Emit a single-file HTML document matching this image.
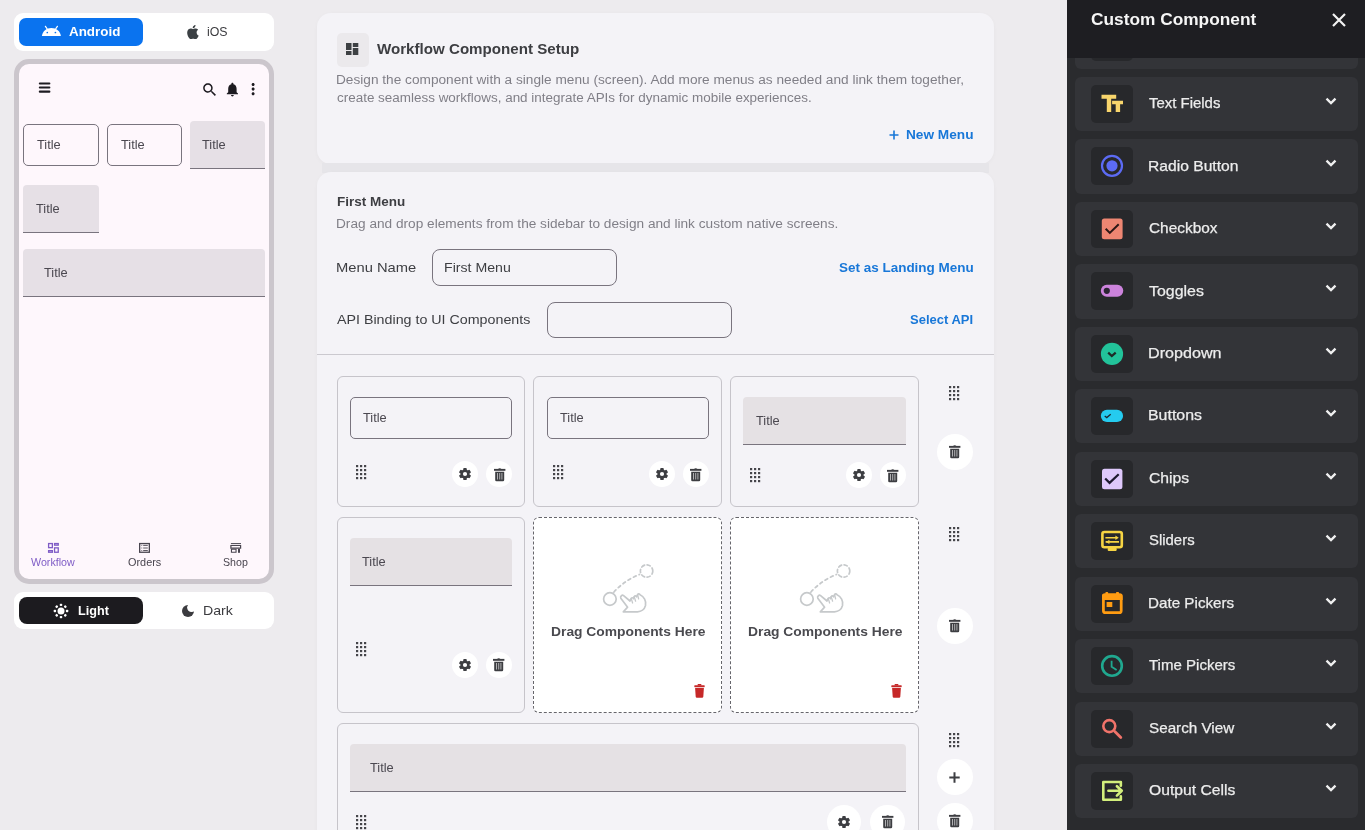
<!DOCTYPE html>
<html><head><meta charset="utf-8"><style>
html,body{margin:0;padding:0;}
body{width:1365px;height:830px;overflow:hidden;position:relative;background:#edebee;font-family:"Liberation Sans",sans-serif;}
body>div,body>svg{position:absolute;}
.t{white-space:nowrap;}
</style></head><body>
<div style="left:14px;top:13px;width:260px;height:38px;background:#fff;border-radius:9px"></div>
<div style="left:19px;top:18px;width:124px;height:28px;background:#0a73ef;border-radius:7px"></div>
<svg style="left:41px;top:25px;" width="21" height="12" viewBox="0 0 21 12"><path d="M0.9 11.1C1.6 5.9 5.3 2.9 10.4 2.9S19.2 5.9 19.9 11.1Z" fill="#fff"/><path d="M4.4 1.3L6 3.6M16.4 1.3L14.8 3.6" stroke="#fff" stroke-width="1.2" stroke-linecap="round"/><circle cx="6.3" cy="7.5" r="0.85" fill="#0a73ef"/><circle cx="14.4" cy="7.5" r="0.85" fill="#0a73ef"/></svg>
<div class="t" style="left:68.70px;top:25.00px;font-size:13.5px;line-height:13.5px;letter-spacing:0.000px;transform:scaleX(0.9924);transform-origin:0 0;color:#fff;font-weight:bold">Android</div>
<svg style="left:186px;top:25px;" width="13" height="14" viewBox="0 0 13 14"><path d="M10.6 7.4c0-1.7 1.4-2.5 1.5-2.6-.8-1.2-2.1-1.3-2.5-1.3-1.1-.1-2.1.6-2.6.6-.6 0-1.4-.6-2.3-.6C3.5 3.5 2.4 4.2 1.8 5.3.5 7.5 1.5 10.8 2.7 12.5c.6.9 1.3 1.8 2.2 1.8.9 0 1.2-.6 2.3-.6s1.4.6 2.3.6c1 0 1.6-.9 2.2-1.8.7-1 1-2 1-2-.1 0-2.1-.8-2.1-3.1zM8.8 2.2c.5-.6.8-1.4.7-2.2-.7 0-1.5.5-2 1.1-.5.5-.9 1.3-.8 2.1.8.1 1.6-.4 2.1-1z" fill="#3b4044"/></svg>
<div class="t" style="left:206.70px;top:25.00px;font-size:13.5px;line-height:13.5px;letter-spacing:0.000px;transform:scaleX(0.9156);transform-origin:0 0;color:#3b3b3f">iOS</div>
<div style="left:14px;top:59px;width:260px;height:525px;box-sizing:border-box;border:5px solid #cbc6cc;border-radius:15px;background:#fef7fc"></div>
<svg style="left:38px;top:82px;" width="13" height="11" viewBox="0 0 13 11"><rect x="0.8" y="0.4" width="11.6" height="2.1" rx="1" fill="#1d1b20"/><rect x="0.8" y="4.5" width="11.6" height="2.1" rx="1" fill="#1d1b20"/><rect x="0.8" y="8.6" width="11.6" height="2.1" rx="1" fill="#1d1b20"/></svg>
<svg style="left:200.7px;top:80.7px;" width="18" height="18" viewBox="0 0 18 18"><path transform="scale(0.73)" d="M15.5 14h-.79l-.28-.27C15.41 12.59 16 11.11 16 9.5 16 5.91 13.09 3 9.5 3S3 5.91 3 9.5 5.91 16 9.5 16c1.61 0 3.09-.59 4.23-1.57l.27.28v.79l5 4.99L20.49 19l-4.99-5zm-6 0C7.01 14 5 11.99 5 9.5S7.01 5 9.5 5 14 7.01 14 9.5 11.99 14 9.5 14z" fill="#1d1b20"/></svg>
<svg style="left:224px;top:81px;" width="17" height="17" viewBox="0 0 17 17"><path transform="scale(0.7)" d="M12 22c1.1 0 2-.9 2-2h-4c0 1.1.89 2 2 2zm6-6v-5c0-3.07-1.64-5.64-4.5-6.32V4c0-.83-.67-1.5-1.5-1.5s-1.5.67-1.5 1.5v.68C7.63 5.36 6 7.92 6 11v5l-2 2v1h16v-1l-2-2z" fill="#1d1b20"/></svg>
<svg style="left:244.1px;top:80px;" width="18" height="18" viewBox="0 0 18 18"><path transform="scale(0.76)" d="M12 8c1.1 0 2-.9 2-2s-.9-2-2-2-2 .9-2 2 .9 2 2 2zm0 2c-1.1 0-2 .9-2 2s.9 2 2 2 2-.9 2-2-.9-2-2-2zm0 6c-1.1 0-2 .9-2 2s.9 2 2 2 2-.9 2-2-.9-2-2-2z" fill="#1d1b20"/></svg>
<div style="left:23px;top:124px;width:76px;height:42px;box-sizing:border-box;border:1px solid #79747e;border-radius:5px"></div>
<div class="t" style="left:36.70px;top:138.00px;font-size:13px;line-height:13px;letter-spacing:0.000px;transform:scaleX(0.9855);transform-origin:0 0;color:#4b4850">Title</div>
<div style="left:107px;top:124px;width:75px;height:42px;box-sizing:border-box;border:1px solid #79747e;border-radius:5px"></div>
<div class="t" style="left:120.50px;top:138.00px;font-size:13px;line-height:13px;letter-spacing:0.000px;transform:scaleX(0.9855);transform-origin:0 0;color:#4b4850">Title</div>
<div style="left:190px;top:121px;width:75px;height:48px;box-sizing:border-box;background:#e6e0e6;border-bottom:1px solid #79747e;border-radius:4px 4px 0 0"></div>
<div class="t" style="left:202.30px;top:138.00px;font-size:13px;line-height:13px;letter-spacing:0.000px;transform:scaleX(0.9855);transform-origin:0 0;color:#4b4850">Title</div>
<div style="left:23px;top:185px;width:76px;height:48px;box-sizing:border-box;background:#e6e0e6;border-bottom:1px solid #79747e;border-radius:4px 4px 0 0"></div>
<div class="t" style="left:35.50px;top:202.00px;font-size:13px;line-height:13px;letter-spacing:0.000px;transform:scaleX(0.9855);transform-origin:0 0;color:#4b4850">Title</div>
<div style="left:23px;top:249px;width:242px;height:48px;box-sizing:border-box;background:#e6e0e6;border-bottom:1px solid #79747e;border-radius:4px 4px 0 0"></div>
<div class="t" style="left:43.50px;top:266.00px;font-size:13px;line-height:13px;letter-spacing:0.000px;transform:scaleX(0.9855);transform-origin:0 0;color:#4b4850">Title</div>
<svg style="left:47px;top:542px;" width="13" height="12" viewBox="0 0 13 12"><g fill="none" stroke="#7f5cc6" stroke-width="1.3"><rect x="1.6" y="1.55" width="3.75" height="4.1"/><rect x="7.55" y="1.55" width="3.7" height="1.6"/><rect x="1.6" y="8.65" width="3.75" height="1.6"/><rect x="7.55" y="5.85" width="3.7" height="4.4"/></g></svg>
<div class="t" style="left:30.80px;top:557.00px;font-size:10.5px;line-height:10.5px;letter-spacing:0.000px;transform:scaleX(1.0185);transform-origin:0 0;color:#7f5cc6">Workflow</div>
<svg style="left:138px;top:542px;" width="13" height="12" viewBox="0 0 13 12"><rect x="1.65" y="1.55" width="9.7" height="8.7" fill="none" stroke="#49454f" stroke-width="1.3"/><path d="M3.4 3.4h0.8M5.2 3.4h4.6M3.4 6h0.8M5.2 6h4.6M3.4 8.5h0.8M5.2 8.5h4.6" stroke="#49454f" stroke-width="0.9"/></svg>
<div class="t" style="left:127.70px;top:557.00px;font-size:10.5px;line-height:10.5px;letter-spacing:0.000px;transform:scaleX(1.0364);transform-origin:0 0;color:#49454f">Orders</div>
<svg style="left:230px;top:542px;" width="12" height="12" viewBox="0 0 12 12"><rect x="0.9" y="1.1" width="10.1" height="1" fill="#49454f"/><path d="M0.3 3h10.9v3.8H0.3z M1.5 4v1.6h8.5V4z" fill="#49454f" fill-rule="evenodd"/><path d="M0.9 6.8h5.7v4H0.9z M2 7.8v2h3.5v-2z" fill="#49454f" fill-rule="evenodd"/><rect x="8" y="6.8" width="2" height="4" fill="#49454f"/></svg>
<div class="t" style="left:223.00px;top:557.00px;font-size:10.5px;line-height:10.5px;letter-spacing:0.000px;transform:scaleX(1.0129);transform-origin:0 0;color:#49454f">Shop</div>
<div style="left:14px;top:592px;width:260px;height:37px;background:#fff;border-radius:9px"></div>
<div style="left:19px;top:597px;width:124px;height:27px;background:#1c1b1f;border-radius:8px"></div>
<svg style="left:50.4px;top:600px;" width="22" height="22" viewBox="0 0 22 22"><circle cx="11" cy="11" r="3.5" fill="#fff"/><rect x="-1.25" y="-7.3" width="2.5" height="2.4" rx="0.8" fill="#fff" transform="translate(11 11) rotate(0)"/><rect x="-1.25" y="-7.3" width="2.5" height="2.4" rx="0.8" fill="#fff" transform="translate(11 11) rotate(45)"/><rect x="-1.25" y="-7.3" width="2.5" height="2.4" rx="0.8" fill="#fff" transform="translate(11 11) rotate(90)"/><rect x="-1.25" y="-7.3" width="2.5" height="2.4" rx="0.8" fill="#fff" transform="translate(11 11) rotate(135)"/><rect x="-1.25" y="-7.3" width="2.5" height="2.4" rx="0.8" fill="#fff" transform="translate(11 11) rotate(180)"/><rect x="-1.25" y="-7.3" width="2.5" height="2.4" rx="0.8" fill="#fff" transform="translate(11 11) rotate(225)"/><rect x="-1.25" y="-7.3" width="2.5" height="2.4" rx="0.8" fill="#fff" transform="translate(11 11) rotate(270)"/><rect x="-1.25" y="-7.3" width="2.5" height="2.4" rx="0.8" fill="#fff" transform="translate(11 11) rotate(315)"/></svg>
<div class="t" style="left:77.60px;top:604.00px;font-size:13.5px;line-height:13.5px;letter-spacing:0.000px;transform:scaleX(0.9346);transform-origin:0 0;color:#fff;font-weight:bold">Light</div>
<svg style="left:177px;top:600px;" width="22" height="22" viewBox="0 0 22 22"><defs><mask id="mm"><rect width="22" height="22" fill="#fff"/><circle cx="14.6" cy="7.6" r="4.5" fill="#000"/></mask></defs><circle cx="11" cy="10.9" r="6" fill="#3b3b3f" mask="url(#mm)"/></svg>
<div class="t" style="left:203.35px;top:604.00px;font-size:13.5px;line-height:13.5px;letter-spacing:0.000px;transform:scaleX(1.0485);transform-origin:0 0;color:#3b3b3f">Dark</div>
<div style="left:317px;top:13px;width:677px;height:151px;background:#f4f3f7;border-radius:14px;box-shadow:0 1px 4px rgba(0,0,0,0.03)"></div>
<div style="left:337px;top:33px;width:32px;height:34px;background:#ebe9ec;border-radius:5px"></div>
<svg style="left:346px;top:43px;" width="13" height="12" viewBox="0 0 13 12"><rect x="0" y="0" width="5.5" height="7" fill="#3d4043"/><rect x="0" y="8" width="5.5" height="4" fill="#3d4043"/><rect x="6.8" y="0" width="5.5" height="4" fill="#3d4043"/><rect x="6.8" y="5" width="5.5" height="7" fill="#3d4043"/></svg>
<div class="t" style="left:376.80px;top:41.00px;font-size:15px;line-height:15px;letter-spacing:0.000px;transform:scaleX(1.0081);transform-origin:0 0;color:#3d3e42;font-weight:bold">Workflow Component Setup</div>
<div class="t" style="left:336.01px;top:74.00px;font-size:12.5px;line-height:12.5px;letter-spacing:0.000px;transform:scaleX(1.0930);transform-origin:0 0;color:#807f87">Design the component with a single menu (screen). Add more menus as needed and link them together,</div>
<div class="t" style="left:337.10px;top:92.00px;font-size:12.5px;line-height:12.5px;letter-spacing:0.000px;transform:scaleX(1.0759);transform-origin:0 0;color:#807f87">create seamless workflows, and integrate APIs for dynamic mobile experiences.</div>
<svg style="left:888.9px;top:129.8px;" width="10" height="10" viewBox="0 0 10 10"><path d="M5 0.5v9M0.5 5h9" stroke="#1877d8" stroke-width="1.6"/></svg>
<div class="t" style="left:906.30px;top:129.00px;font-size:12.5px;line-height:12.5px;letter-spacing:0.000px;transform:scaleX(1.0920);transform-origin:0 0;color:#1877d8;font-weight:bold">New Menu</div>
<div style="left:322px;top:163px;width:667px;height:10px;background:#e6e5e9"></div>
<div style="left:317px;top:172px;width:677px;height:700px;background:#f4f3f7;border-radius:14px;box-shadow:0 1px 4px rgba(0,0,0,0.03)"></div>
<div class="t" style="left:336.90px;top:195.00px;font-size:13px;line-height:13px;letter-spacing:0.000px;transform:scaleX(1.0367);transform-origin:0 0;color:#3d3e42;font-weight:bold">First Menu</div>
<div class="t" style="left:335.91px;top:218.00px;font-size:12.5px;line-height:12.5px;letter-spacing:0.000px;transform:scaleX(1.0921);transform-origin:0 0;color:#807f87">Drag and drop elements from the sidebar to design and link custom native screens.</div>
<div class="t" style="left:335.87px;top:261.00px;font-size:13px;line-height:13px;letter-spacing:0.000px;transform:scaleX(1.1325);transform-origin:0 0;color:#3d3e42">Menu Name</div>
<div style="left:432px;top:249px;width:185px;height:37px;box-sizing:border-box;border:1px solid #79747e;border-radius:8px"></div>
<div class="t" style="left:443.91px;top:261.00px;font-size:13px;line-height:13px;letter-spacing:0.000px;transform:scaleX(1.0869);transform-origin:0 0;color:#3d3e42">First Menu</div>
<div class="t" style="left:838.60px;top:261.00px;font-size:13px;line-height:13px;letter-spacing:0.000px;transform:scaleX(1.0364);transform-origin:0 0;color:#1877d8;font-weight:bold">Set as Landing Menu</div>
<div class="t" style="left:337.00px;top:313.00px;font-size:13px;line-height:13px;letter-spacing:0.000px;transform:scaleX(1.0966);transform-origin:0 0;color:#3d3e42">API Binding to UI Components</div>
<div style="left:547px;top:302px;width:185px;height:36px;box-sizing:border-box;border:1px solid #79747e;border-radius:8px"></div>
<div class="t" style="left:910.20px;top:313.00px;font-size:13px;line-height:13px;letter-spacing:0.000px;transform:scaleX(0.9988);transform-origin:0 0;color:#1877d8;font-weight:bold">Select API</div>
<div style="left:317px;top:354px;width:677px;height:1px;background:#cbc9cf"></div>
<div style="left:337px;top:376px;width:188px;height:131px;box-sizing:border-box;border:1px solid #c6c4ca;border-radius:6px"></div>
<div style="left:350px;top:397px;width:162px;height:41.5px;box-sizing:border-box;border:1px solid #79747e;border-radius:5px"></div>
<div class="t" style="left:362.80px;top:411.00px;font-size:13px;line-height:13px;letter-spacing:0.000px;transform:scaleX(0.9855);transform-origin:0 0;color:#4b4850">Title</div>
<svg style="left:356.30px;top:464.90px;" width="11" height="15" viewBox="0 0 11 15"><rect x="0.00" y="0.00" width="2.2" height="2.2" fill="#45454a"/><rect x="4.00" y="0.00" width="2.2" height="2.2" fill="#45454a"/><rect x="8.00" y="0.00" width="2.2" height="2.2" fill="#45454a"/><rect x="0.00" y="4.00" width="2.2" height="2.2" fill="#45454a"/><rect x="4.00" y="4.00" width="2.2" height="2.2" fill="#45454a"/><rect x="8.00" y="4.00" width="2.2" height="2.2" fill="#45454a"/><rect x="0.00" y="8.00" width="2.2" height="2.2" fill="#45454a"/><rect x="4.00" y="8.00" width="2.2" height="2.2" fill="#45454a"/><rect x="8.00" y="8.00" width="2.2" height="2.2" fill="#45454a"/><rect x="0.00" y="12.00" width="2.2" height="2.2" fill="#45454a"/><rect x="4.00" y="12.00" width="2.2" height="2.2" fill="#45454a"/><rect x="8.00" y="12.00" width="2.2" height="2.2" fill="#45454a"/></svg>
<div style="left:452.30px;top:461.20px;width:26px;height:26px;background:#fff;border-radius:50%"></div>
<svg style="left:457.30px;top:466.20px;" width="16" height="16" viewBox="0 0 16 16"><g transform="translate(8,8)"><rect x="-1.75" y="-6.1" width="3.5" height="3.4" rx="0.9" transform="rotate(0)" fill="#3d3e42"/><rect x="-1.75" y="-6.1" width="3.5" height="3.4" rx="0.9" transform="rotate(60)" fill="#3d3e42"/><rect x="-1.75" y="-6.1" width="3.5" height="3.4" rx="0.9" transform="rotate(120)" fill="#3d3e42"/><rect x="-1.75" y="-6.1" width="3.5" height="3.4" rx="0.9" transform="rotate(180)" fill="#3d3e42"/><rect x="-1.75" y="-6.1" width="3.5" height="3.4" rx="0.9" transform="rotate(240)" fill="#3d3e42"/><rect x="-1.75" y="-6.1" width="3.5" height="3.4" rx="0.9" transform="rotate(300)" fill="#3d3e42"/><circle r="4.5" fill="#3d3e42"/><circle r="2.1" fill="#fff"/></g></svg>
<div style="left:486.30px;top:461.20px;width:26px;height:26px;background:#fff;border-radius:50%"></div>
<svg style="left:493.60px;top:467.60px;" width="12" height="14" viewBox="0 0 12 14"><rect x="0" y="0.9" width="11.4" height="1.9" fill="#3d3e42"/><path d="M4 0.9Q5.7-0.2 7.4 0.9z" fill="#3d3e42"/><path d="M1.2 3.7h9v8.2a1.3 1.3 0 0 1-1.3 1.3H2.5a1.3 1.3 0 0 1-1.3-1.3z" fill="#3d3e42"/><path d="M3.5 5v6.5M5.7 5v6.5M7.9 5v6.5" stroke="#bdbdc0" stroke-width="0.9"/></svg>
<div style="left:533px;top:376px;width:189px;height:131px;box-sizing:border-box;border:1px solid #c6c4ca;border-radius:6px"></div>
<div style="left:546.67px;top:397px;width:162px;height:41.5px;box-sizing:border-box;border:1px solid #79747e;border-radius:5px"></div>
<div class="t" style="left:559.50px;top:411.00px;font-size:13px;line-height:13px;letter-spacing:0.000px;transform:scaleX(0.9855);transform-origin:0 0;color:#4b4850">Title</div>
<svg style="left:553.00px;top:464.90px;" width="11" height="15" viewBox="0 0 11 15"><rect x="0.00" y="0.00" width="2.2" height="2.2" fill="#45454a"/><rect x="4.00" y="0.00" width="2.2" height="2.2" fill="#45454a"/><rect x="8.00" y="0.00" width="2.2" height="2.2" fill="#45454a"/><rect x="0.00" y="4.00" width="2.2" height="2.2" fill="#45454a"/><rect x="4.00" y="4.00" width="2.2" height="2.2" fill="#45454a"/><rect x="8.00" y="4.00" width="2.2" height="2.2" fill="#45454a"/><rect x="0.00" y="8.00" width="2.2" height="2.2" fill="#45454a"/><rect x="4.00" y="8.00" width="2.2" height="2.2" fill="#45454a"/><rect x="8.00" y="8.00" width="2.2" height="2.2" fill="#45454a"/><rect x="0.00" y="12.00" width="2.2" height="2.2" fill="#45454a"/><rect x="4.00" y="12.00" width="2.2" height="2.2" fill="#45454a"/><rect x="8.00" y="12.00" width="2.2" height="2.2" fill="#45454a"/></svg>
<div style="left:649.00px;top:461.20px;width:26px;height:26px;background:#fff;border-radius:50%"></div>
<svg style="left:654.00px;top:466.20px;" width="16" height="16" viewBox="0 0 16 16"><g transform="translate(8,8)"><rect x="-1.75" y="-6.1" width="3.5" height="3.4" rx="0.9" transform="rotate(0)" fill="#3d3e42"/><rect x="-1.75" y="-6.1" width="3.5" height="3.4" rx="0.9" transform="rotate(60)" fill="#3d3e42"/><rect x="-1.75" y="-6.1" width="3.5" height="3.4" rx="0.9" transform="rotate(120)" fill="#3d3e42"/><rect x="-1.75" y="-6.1" width="3.5" height="3.4" rx="0.9" transform="rotate(180)" fill="#3d3e42"/><rect x="-1.75" y="-6.1" width="3.5" height="3.4" rx="0.9" transform="rotate(240)" fill="#3d3e42"/><rect x="-1.75" y="-6.1" width="3.5" height="3.4" rx="0.9" transform="rotate(300)" fill="#3d3e42"/><circle r="4.5" fill="#3d3e42"/><circle r="2.1" fill="#fff"/></g></svg>
<div style="left:683.00px;top:461.20px;width:26px;height:26px;background:#fff;border-radius:50%"></div>
<svg style="left:690.30px;top:467.60px;" width="12" height="14" viewBox="0 0 12 14"><rect x="0" y="0.9" width="11.4" height="1.9" fill="#3d3e42"/><path d="M4 0.9Q5.7-0.2 7.4 0.9z" fill="#3d3e42"/><path d="M1.2 3.7h9v8.2a1.3 1.3 0 0 1-1.3 1.3H2.5a1.3 1.3 0 0 1-1.3-1.3z" fill="#3d3e42"/><path d="M3.5 5v6.5M5.7 5v6.5M7.9 5v6.5" stroke="#bdbdc0" stroke-width="0.9"/></svg>
<div style="left:730px;top:376px;width:189px;height:131px;box-sizing:border-box;border:1px solid #c6c4ca;border-radius:6px"></div>
<div style="left:743px;top:397px;width:163px;height:48px;box-sizing:border-box;background:#e5e1e4;border-bottom:1px solid #79747e;border-radius:4px 4px 0 0"></div>
<div class="t" style="left:755.50px;top:414.00px;font-size:13px;line-height:13px;letter-spacing:0.000px;transform:scaleX(0.9855);transform-origin:0 0;color:#4b4850">Title</div>
<svg style="left:750.00px;top:467.70px;" width="11" height="15" viewBox="0 0 11 15"><rect x="0.00" y="0.00" width="2.2" height="2.2" fill="#45454a"/><rect x="4.00" y="0.00" width="2.2" height="2.2" fill="#45454a"/><rect x="8.00" y="0.00" width="2.2" height="2.2" fill="#45454a"/><rect x="0.00" y="4.00" width="2.2" height="2.2" fill="#45454a"/><rect x="4.00" y="4.00" width="2.2" height="2.2" fill="#45454a"/><rect x="8.00" y="4.00" width="2.2" height="2.2" fill="#45454a"/><rect x="0.00" y="8.00" width="2.2" height="2.2" fill="#45454a"/><rect x="4.00" y="8.00" width="2.2" height="2.2" fill="#45454a"/><rect x="8.00" y="8.00" width="2.2" height="2.2" fill="#45454a"/><rect x="0.00" y="12.00" width="2.2" height="2.2" fill="#45454a"/><rect x="4.00" y="12.00" width="2.2" height="2.2" fill="#45454a"/><rect x="8.00" y="12.00" width="2.2" height="2.2" fill="#45454a"/></svg>
<div style="left:845.70px;top:462.40px;width:26px;height:26px;background:#fff;border-radius:50%"></div>
<svg style="left:850.70px;top:467.40px;" width="16" height="16" viewBox="0 0 16 16"><g transform="translate(8,8)"><rect x="-1.75" y="-6.1" width="3.5" height="3.4" rx="0.9" transform="rotate(0)" fill="#3d3e42"/><rect x="-1.75" y="-6.1" width="3.5" height="3.4" rx="0.9" transform="rotate(60)" fill="#3d3e42"/><rect x="-1.75" y="-6.1" width="3.5" height="3.4" rx="0.9" transform="rotate(120)" fill="#3d3e42"/><rect x="-1.75" y="-6.1" width="3.5" height="3.4" rx="0.9" transform="rotate(180)" fill="#3d3e42"/><rect x="-1.75" y="-6.1" width="3.5" height="3.4" rx="0.9" transform="rotate(240)" fill="#3d3e42"/><rect x="-1.75" y="-6.1" width="3.5" height="3.4" rx="0.9" transform="rotate(300)" fill="#3d3e42"/><circle r="4.5" fill="#3d3e42"/><circle r="2.1" fill="#fff"/></g></svg>
<div style="left:879.70px;top:462.40px;width:26px;height:26px;background:#fff;border-radius:50%"></div>
<svg style="left:887.00px;top:468.80px;" width="12" height="14" viewBox="0 0 12 14"><rect x="0" y="0.9" width="11.4" height="1.9" fill="#3d3e42"/><path d="M4 0.9Q5.7-0.2 7.4 0.9z" fill="#3d3e42"/><path d="M1.2 3.7h9v8.2a1.3 1.3 0 0 1-1.3 1.3H2.5a1.3 1.3 0 0 1-1.3-1.3z" fill="#3d3e42"/><path d="M3.5 5v6.5M5.7 5v6.5M7.9 5v6.5" stroke="#bdbdc0" stroke-width="0.9"/></svg>
<svg style="left:949.10px;top:386.00px;" width="11" height="15" viewBox="0 0 11 15"><rect x="0.00" y="0.00" width="2.2" height="2.2" fill="#45454a"/><rect x="4.00" y="0.00" width="2.2" height="2.2" fill="#45454a"/><rect x="8.00" y="0.00" width="2.2" height="2.2" fill="#45454a"/><rect x="0.00" y="4.00" width="2.2" height="2.2" fill="#45454a"/><rect x="4.00" y="4.00" width="2.2" height="2.2" fill="#45454a"/><rect x="8.00" y="4.00" width="2.2" height="2.2" fill="#45454a"/><rect x="0.00" y="8.00" width="2.2" height="2.2" fill="#45454a"/><rect x="4.00" y="8.00" width="2.2" height="2.2" fill="#45454a"/><rect x="8.00" y="8.00" width="2.2" height="2.2" fill="#45454a"/><rect x="0.00" y="12.00" width="2.2" height="2.2" fill="#45454a"/><rect x="4.00" y="12.00" width="2.2" height="2.2" fill="#45454a"/><rect x="8.00" y="12.00" width="2.2" height="2.2" fill="#45454a"/></svg>
<div style="left:936.70px;top:433.50px;width:36px;height:36px;background:#fff;border-radius:50%"></div>
<svg style="left:949.00px;top:444.90px;" width="12" height="14" viewBox="0 0 12 14"><rect x="0" y="0.9" width="11.4" height="1.9" fill="#3d3e42"/><path d="M4 0.9Q5.7-0.2 7.4 0.9z" fill="#3d3e42"/><path d="M1.2 3.7h9v8.2a1.3 1.3 0 0 1-1.3 1.3H2.5a1.3 1.3 0 0 1-1.3-1.3z" fill="#3d3e42"/><path d="M3.5 5v6.5M5.7 5v6.5M7.9 5v6.5" stroke="#bdbdc0" stroke-width="0.9"/></svg>
<div style="left:337px;top:517px;width:188px;height:196px;box-sizing:border-box;border:1px solid #c6c4ca;border-radius:6px"></div>
<div style="left:350px;top:538px;width:162px;height:48px;box-sizing:border-box;background:#e5e1e4;border-bottom:1px solid #79747e;border-radius:4px 4px 0 0"></div>
<div class="t" style="left:362.00px;top:555.00px;font-size:13px;line-height:13px;letter-spacing:0.000px;transform:scaleX(0.9855);transform-origin:0 0;color:#4b4850">Title</div>
<svg style="left:356.10px;top:641.80px;" width="11" height="15" viewBox="0 0 11 15"><rect x="0.00" y="0.00" width="2.2" height="2.2" fill="#45454a"/><rect x="4.00" y="0.00" width="2.2" height="2.2" fill="#45454a"/><rect x="8.00" y="0.00" width="2.2" height="2.2" fill="#45454a"/><rect x="0.00" y="4.00" width="2.2" height="2.2" fill="#45454a"/><rect x="4.00" y="4.00" width="2.2" height="2.2" fill="#45454a"/><rect x="8.00" y="4.00" width="2.2" height="2.2" fill="#45454a"/><rect x="0.00" y="8.00" width="2.2" height="2.2" fill="#45454a"/><rect x="4.00" y="8.00" width="2.2" height="2.2" fill="#45454a"/><rect x="8.00" y="8.00" width="2.2" height="2.2" fill="#45454a"/><rect x="0.00" y="12.00" width="2.2" height="2.2" fill="#45454a"/><rect x="4.00" y="12.00" width="2.2" height="2.2" fill="#45454a"/><rect x="8.00" y="12.00" width="2.2" height="2.2" fill="#45454a"/></svg>
<div style="left:452.20px;top:651.80px;width:26px;height:26px;background:#fff;border-radius:50%"></div>
<svg style="left:457.20px;top:656.80px;" width="16" height="16" viewBox="0 0 16 16"><g transform="translate(8,8)"><rect x="-1.75" y="-6.1" width="3.5" height="3.4" rx="0.9" transform="rotate(0)" fill="#3d3e42"/><rect x="-1.75" y="-6.1" width="3.5" height="3.4" rx="0.9" transform="rotate(60)" fill="#3d3e42"/><rect x="-1.75" y="-6.1" width="3.5" height="3.4" rx="0.9" transform="rotate(120)" fill="#3d3e42"/><rect x="-1.75" y="-6.1" width="3.5" height="3.4" rx="0.9" transform="rotate(180)" fill="#3d3e42"/><rect x="-1.75" y="-6.1" width="3.5" height="3.4" rx="0.9" transform="rotate(240)" fill="#3d3e42"/><rect x="-1.75" y="-6.1" width="3.5" height="3.4" rx="0.9" transform="rotate(300)" fill="#3d3e42"/><circle r="4.5" fill="#3d3e42"/><circle r="2.1" fill="#fff"/></g></svg>
<div style="left:486.10px;top:651.80px;width:26px;height:26px;background:#fff;border-radius:50%"></div>
<svg style="left:493.40px;top:658.20px;" width="12" height="14" viewBox="0 0 12 14"><rect x="0" y="0.9" width="11.4" height="1.9" fill="#3d3e42"/><path d="M4 0.9Q5.7-0.2 7.4 0.9z" fill="#3d3e42"/><path d="M1.2 3.7h9v8.2a1.3 1.3 0 0 1-1.3 1.3H2.5a1.3 1.3 0 0 1-1.3-1.3z" fill="#3d3e42"/><path d="M3.5 5v6.5M5.7 5v6.5M7.9 5v6.5" stroke="#bdbdc0" stroke-width="0.9"/></svg>
<div style="left:533px;top:517px;width:189px;height:196px;box-sizing:border-box;border:1px dashed #66656b;border-radius:6px;background:#fff"></div>
<div class="t" style="left:550.90px;top:625.00px;font-size:13px;line-height:13px;letter-spacing:0.000px;transform:scaleX(1.0644);transform-origin:0 0;color:#4a4a4f;font-weight:bold">Drag Components Here</div>
<svg style="left:693.50px;top:683.50px;" width="11" height="14" viewBox="0 0 11 14"><rect x="0.3" y="1.2" width="10.4" height="2" rx="0.6" fill="#c62828"/><rect x="3.6" y="0" width="3.8" height="1.6" rx="0.6" fill="#c62828"/><path d="M1.1 4h8.8l-0.6 8.7a1.2 1.2 0 0 1-1.2 1.1H2.9a1.2 1.2 0 0 1-1.2-1.1z" fill="#c62828"/></svg>
<svg style="left:598px;top:558px;" width="60" height="60" viewBox="0 0 60 60"><g fill="none" stroke="#c6c9cb" stroke-width="1.7" stroke-linecap="round" stroke-linejoin="round"><circle cx="11.9" cy="41" r="6.3"/><circle cx="48.6" cy="13" r="6.2" stroke-dasharray="3.2 2.6"/><path d="M15.8 34.2Q27 22 41.5 16.5" stroke-dasharray="3 3.2"/><path d="M29.6 49.2L22.8 40.2C22 38.5 24 36.5 25.6 37.6L32 43L33.2 40.4C33.8 39.5 35.2 39.5 35.6 40.6L36.2 38.6C36.8 37.7 38.2 37.7 38.6 38.8L39.6 36.6C40.3 35.6 41.6 35.8 42 36.8C46 38.5 48.5 43 47.5 47.5C46.5 51.5 43 53.8 39.5 53.8L25.3 53.8Z"/><path d="M33.2 40.4L34.6 45M36.2 38.6L37.6 43.2M39.6 36.6L40.6 40.8" stroke-width="1.3"/></g></svg>
<div style="left:730px;top:517px;width:189px;height:196px;box-sizing:border-box;border:1px dashed #66656b;border-radius:6px;background:#fff"></div>
<div class="t" style="left:747.90px;top:625.00px;font-size:13px;line-height:13px;letter-spacing:0.000px;transform:scaleX(1.0644);transform-origin:0 0;color:#4a4a4f;font-weight:bold">Drag Components Here</div>
<svg style="left:890.50px;top:683.50px;" width="11" height="14" viewBox="0 0 11 14"><rect x="0.3" y="1.2" width="10.4" height="2" rx="0.6" fill="#c62828"/><rect x="3.6" y="0" width="3.8" height="1.6" rx="0.6" fill="#c62828"/><path d="M1.1 4h8.8l-0.6 8.7a1.2 1.2 0 0 1-1.2 1.1H2.9a1.2 1.2 0 0 1-1.2-1.1z" fill="#c62828"/></svg>
<svg style="left:795px;top:558px;" width="60" height="60" viewBox="0 0 60 60"><g fill="none" stroke="#c6c9cb" stroke-width="1.7" stroke-linecap="round" stroke-linejoin="round"><circle cx="11.9" cy="41" r="6.3"/><circle cx="48.6" cy="13" r="6.2" stroke-dasharray="3.2 2.6"/><path d="M15.8 34.2Q27 22 41.5 16.5" stroke-dasharray="3 3.2"/><path d="M29.6 49.2L22.8 40.2C22 38.5 24 36.5 25.6 37.6L32 43L33.2 40.4C33.8 39.5 35.2 39.5 35.6 40.6L36.2 38.6C36.8 37.7 38.2 37.7 38.6 38.8L39.6 36.6C40.3 35.6 41.6 35.8 42 36.8C46 38.5 48.5 43 47.5 47.5C46.5 51.5 43 53.8 39.5 53.8L25.3 53.8Z"/><path d="M33.2 40.4L34.6 45M36.2 38.6L37.6 43.2M39.6 36.6L40.6 40.8" stroke-width="1.3"/></g></svg>
<svg style="left:949.10px;top:526.70px;" width="11" height="15" viewBox="0 0 11 15"><rect x="0.00" y="0.00" width="2.2" height="2.2" fill="#45454a"/><rect x="4.00" y="0.00" width="2.2" height="2.2" fill="#45454a"/><rect x="8.00" y="0.00" width="2.2" height="2.2" fill="#45454a"/><rect x="0.00" y="4.00" width="2.2" height="2.2" fill="#45454a"/><rect x="4.00" y="4.00" width="2.2" height="2.2" fill="#45454a"/><rect x="8.00" y="4.00" width="2.2" height="2.2" fill="#45454a"/><rect x="0.00" y="8.00" width="2.2" height="2.2" fill="#45454a"/><rect x="4.00" y="8.00" width="2.2" height="2.2" fill="#45454a"/><rect x="8.00" y="8.00" width="2.2" height="2.2" fill="#45454a"/><rect x="0.00" y="12.00" width="2.2" height="2.2" fill="#45454a"/><rect x="4.00" y="12.00" width="2.2" height="2.2" fill="#45454a"/><rect x="8.00" y="12.00" width="2.2" height="2.2" fill="#45454a"/></svg>
<div style="left:936.80px;top:608.00px;width:36px;height:36px;background:#fff;border-radius:50%"></div>
<svg style="left:949.10px;top:619.40px;" width="12" height="14" viewBox="0 0 12 14"><rect x="0" y="0.9" width="11.4" height="1.9" fill="#3d3e42"/><path d="M4 0.9Q5.7-0.2 7.4 0.9z" fill="#3d3e42"/><path d="M1.2 3.7h9v8.2a1.3 1.3 0 0 1-1.3 1.3H2.5a1.3 1.3 0 0 1-1.3-1.3z" fill="#3d3e42"/><path d="M3.5 5v6.5M5.7 5v6.5M7.9 5v6.5" stroke="#bdbdc0" stroke-width="0.9"/></svg>
<div style="left:337px;top:723px;width:582px;height:200px;box-sizing:border-box;border:1px solid #c6c4ca;border-radius:6px"></div>
<div style="left:350px;top:744px;width:556px;height:48px;box-sizing:border-box;background:#e5e1e4;border-bottom:1px solid #79747e;border-radius:4px 4px 0 0"></div>
<div class="t" style="left:370.00px;top:761.00px;font-size:13px;line-height:13px;letter-spacing:0.000px;transform:scaleX(0.9855);transform-origin:0 0;color:#4b4850">Title</div>
<svg style="left:355.90px;top:814.50px;" width="11" height="15" viewBox="0 0 11 15"><rect x="0.00" y="0.00" width="2.2" height="2.2" fill="#45454a"/><rect x="4.00" y="0.00" width="2.2" height="2.2" fill="#45454a"/><rect x="8.00" y="0.00" width="2.2" height="2.2" fill="#45454a"/><rect x="0.00" y="4.00" width="2.2" height="2.2" fill="#45454a"/><rect x="4.00" y="4.00" width="2.2" height="2.2" fill="#45454a"/><rect x="8.00" y="4.00" width="2.2" height="2.2" fill="#45454a"/><rect x="0.00" y="8.00" width="2.2" height="2.2" fill="#45454a"/><rect x="4.00" y="8.00" width="2.2" height="2.2" fill="#45454a"/><rect x="8.00" y="8.00" width="2.2" height="2.2" fill="#45454a"/><rect x="0.00" y="12.00" width="2.2" height="2.2" fill="#45454a"/><rect x="4.00" y="12.00" width="2.2" height="2.2" fill="#45454a"/><rect x="8.00" y="12.00" width="2.2" height="2.2" fill="#45454a"/></svg>
<div style="left:826.50px;top:804.70px;width:34.6px;height:34.6px;background:#fff;border-radius:50%"></div>
<svg style="left:835.80px;top:814.00px;" width="16" height="16" viewBox="0 0 16 16"><g transform="translate(8,8)"><rect x="-1.75" y="-6.1" width="3.5" height="3.4" rx="0.9" transform="rotate(0)" fill="#3d3e42"/><rect x="-1.75" y="-6.1" width="3.5" height="3.4" rx="0.9" transform="rotate(60)" fill="#3d3e42"/><rect x="-1.75" y="-6.1" width="3.5" height="3.4" rx="0.9" transform="rotate(120)" fill="#3d3e42"/><rect x="-1.75" y="-6.1" width="3.5" height="3.4" rx="0.9" transform="rotate(180)" fill="#3d3e42"/><rect x="-1.75" y="-6.1" width="3.5" height="3.4" rx="0.9" transform="rotate(240)" fill="#3d3e42"/><rect x="-1.75" y="-6.1" width="3.5" height="3.4" rx="0.9" transform="rotate(300)" fill="#3d3e42"/><circle r="4.5" fill="#3d3e42"/><circle r="2.1" fill="#fff"/></g></svg>
<div style="left:870.30px;top:804.70px;width:34.6px;height:34.6px;background:#fff;border-radius:50%"></div>
<svg style="left:881.90px;top:815.40px;" width="12" height="14" viewBox="0 0 12 14"><rect x="0" y="0.9" width="11.4" height="1.9" fill="#3d3e42"/><path d="M4 0.9Q5.7-0.2 7.4 0.9z" fill="#3d3e42"/><path d="M1.2 3.7h9v8.2a1.3 1.3 0 0 1-1.3 1.3H2.5a1.3 1.3 0 0 1-1.3-1.3z" fill="#3d3e42"/><path d="M3.5 5v6.5M5.7 5v6.5M7.9 5v6.5" stroke="#bdbdc0" stroke-width="0.9"/></svg>
<svg style="left:949.20px;top:732.90px;" width="11" height="15" viewBox="0 0 11 15"><rect x="0.00" y="0.00" width="2.2" height="2.2" fill="#45454a"/><rect x="4.00" y="0.00" width="2.2" height="2.2" fill="#45454a"/><rect x="8.00" y="0.00" width="2.2" height="2.2" fill="#45454a"/><rect x="0.00" y="4.00" width="2.2" height="2.2" fill="#45454a"/><rect x="4.00" y="4.00" width="2.2" height="2.2" fill="#45454a"/><rect x="8.00" y="4.00" width="2.2" height="2.2" fill="#45454a"/><rect x="0.00" y="8.00" width="2.2" height="2.2" fill="#45454a"/><rect x="4.00" y="8.00" width="2.2" height="2.2" fill="#45454a"/><rect x="8.00" y="8.00" width="2.2" height="2.2" fill="#45454a"/><rect x="0.00" y="12.00" width="2.2" height="2.2" fill="#45454a"/><rect x="4.00" y="12.00" width="2.2" height="2.2" fill="#45454a"/><rect x="8.00" y="12.00" width="2.2" height="2.2" fill="#45454a"/></svg>
<div style="left:937.2px;top:759px;width:36px;height:36px;background:#fff;border-radius:50%"></div>
<svg style="left:949.2px;top:771.5px;" width="11" height="11" viewBox="0 0 11 11"><path d="M5.5 0.3v10.4M0.3 5.5h10.4" stroke="#3d3e42" stroke-width="2"/></svg>
<div style="left:937.00px;top:803.00px;width:36px;height:36px;background:#fff;border-radius:50%"></div>
<svg style="left:949.30px;top:814.40px;" width="12" height="14" viewBox="0 0 12 14"><rect x="0" y="0.9" width="11.4" height="1.9" fill="#3d3e42"/><path d="M4 0.9Q5.7-0.2 7.4 0.9z" fill="#3d3e42"/><path d="M1.2 3.7h9v8.2a1.3 1.3 0 0 1-1.3 1.3H2.5a1.3 1.3 0 0 1-1.3-1.3z" fill="#3d3e42"/><path d="M3.5 5v6.5M5.7 5v6.5M7.9 5v6.5" stroke="#bdbdc0" stroke-width="0.9"/></svg>
<div style="left:1067px;top:0px;width:298px;height:830px;background:#2a2b2e"></div>
<div style="left:1075px;top:14px;width:283px;height:55px;background:#333438;border-radius:6px"></div>
<div style="left:1091px;top:23px;width:42px;height:38px;background:#27282b;border-radius:5px"></div>
<div style="left:1067px;top:0px;width:298px;height:58px;background:#1e1e22"></div>
<div class="t" style="left:1091.20px;top:11.00px;font-size:16.5px;line-height:16.5px;letter-spacing:0.000px;transform:scaleX(1.0483);transform-origin:0 0;color:#f6f6f6;font-weight:bold">Custom Component</div>
<svg style="left:1332px;top:13px;" width="14" height="14" viewBox="0 0 14 14"><path d="M1 1L13 13M13 1L1 13" stroke="#f2f2f2" stroke-width="2.2"/></svg>
<div style="left:1075px;top:77.00px;width:283px;height:54.2px;background:#333438;border-radius:6px"></div>
<div style="left:1091px;top:85.00px;width:42px;height:38px;background:#27282b;border-radius:5px"></div>
<svg style="left:1099px;top:91.00px;" width="26" height="26" viewBox="0 0 26 26"><path d="M2.5 3.85h14.7v3.85h-5v13.3H7.8V7.7H2.5z" fill="#f8d56c"/><path d="M13.1 9.8h10.9v3.4h-2.9V21h-4.4v-7.8h-3.6z" fill="#f8d56c"/></svg>
<div class="t" style="left:1149.30px;top:95.00px;font-size:15px;line-height:15px;letter-spacing:0.000px;transform:scaleX(0.9959);transform-origin:0 0;color:#ededed;-webkit-text-stroke:0.25px #ededed">Text Fields</div>
<svg style="left:1325px;top:97.0px;" width="12" height="9" viewBox="0 0 12 9"><path d="M1.5 1.6L6 6.1 10.5 1.6" fill="none" stroke="#f0f0f0" stroke-width="2.3"/></svg>
<div style="left:1075px;top:139.45px;width:283px;height:54.2px;background:#333438;border-radius:6px"></div>
<div style="left:1091px;top:147.45px;width:42px;height:38px;background:#27282b;border-radius:5px"></div>
<svg style="left:1099px;top:153.45px;" width="26" height="26" viewBox="0 0 26 26"><circle cx="13" cy="12.8" r="10" fill="none" stroke="#5c6bf4" stroke-width="2.2"/><circle cx="13" cy="12.8" r="5.6" fill="#5c6bf4"/></svg>
<div class="t" style="left:1148.26px;top:158.00px;font-size:15px;line-height:15px;letter-spacing:0.000px;transform:scaleX(1.0424);transform-origin:0 0;color:#ededed;-webkit-text-stroke:0.25px #ededed">Radio Button</div>
<svg style="left:1325px;top:159.45px;" width="12" height="9" viewBox="0 0 12 9"><path d="M1.5 1.6L6 6.1 10.5 1.6" fill="none" stroke="#f0f0f0" stroke-width="2.3"/></svg>
<div style="left:1075px;top:201.90px;width:283px;height:54.2px;background:#333438;border-radius:6px"></div>
<div style="left:1091px;top:209.90px;width:42px;height:38px;background:#27282b;border-radius:5px"></div>
<svg style="left:1099px;top:215.90px;" width="26" height="26" viewBox="0 0 26 26"><rect x="2.8" y="2.5" width="20.8" height="20.8" rx="2.5" fill="#ee8672"/><path d="M6.7 12.8l4.1 4.1 8.9-8.7" fill="none" stroke="#2d1816" stroke-width="2"/></svg>
<div class="t" style="left:1149.30px;top:220.00px;font-size:15px;line-height:15px;letter-spacing:0.000px;transform:scaleX(1.0268);transform-origin:0 0;color:#ededed;-webkit-text-stroke:0.25px #ededed">Checkbox</div>
<svg style="left:1325px;top:221.9px;" width="12" height="9" viewBox="0 0 12 9"><path d="M1.5 1.6L6 6.1 10.5 1.6" fill="none" stroke="#f0f0f0" stroke-width="2.3"/></svg>
<div style="left:1075px;top:264.35px;width:283px;height:54.2px;background:#333438;border-radius:6px"></div>
<div style="left:1091px;top:272.35px;width:42px;height:38px;background:#27282b;border-radius:5px"></div>
<svg style="left:1099px;top:278.35px;" width="26" height="26" viewBox="0 0 26 26"><rect x="1.85" y="6.8" width="22.4" height="11.9" rx="5.95" fill="#cc83dc"/><circle cx="7.8" cy="12.8" r="3.1" fill="#2a2432"/></svg>
<div class="t" style="left:1149.30px;top:283.00px;font-size:15px;line-height:15px;letter-spacing:0.000px;transform:scaleX(1.0625);transform-origin:0 0;color:#ededed;-webkit-text-stroke:0.25px #ededed">Toggles</div>
<svg style="left:1325px;top:284.35px;" width="12" height="9" viewBox="0 0 12 9"><path d="M1.5 1.6L6 6.1 10.5 1.6" fill="none" stroke="#f0f0f0" stroke-width="2.3"/></svg>
<div style="left:1075px;top:326.80px;width:283px;height:54.2px;background:#333438;border-radius:6px"></div>
<div style="left:1091px;top:334.80px;width:42px;height:38px;background:#27282b;border-radius:5px"></div>
<svg style="left:1099px;top:340.80px;" width="26" height="26" viewBox="0 0 26 26"><circle cx="13" cy="12.9" r="11.1" fill="#22c39a"/><path d="M9.2 11.6l3.6 3.5 3.9-3.5" fill="none" stroke="#1e2a26" stroke-width="2.2"/></svg>
<div class="t" style="left:1148.22px;top:345.00px;font-size:15px;line-height:15px;letter-spacing:0.000px;transform:scaleX(1.0756);transform-origin:0 0;color:#ededed;-webkit-text-stroke:0.25px #ededed">Dropdown</div>
<svg style="left:1325px;top:346.8px;" width="12" height="9" viewBox="0 0 12 9"><path d="M1.5 1.6L6 6.1 10.5 1.6" fill="none" stroke="#f0f0f0" stroke-width="2.3"/></svg>
<div style="left:1075px;top:389.25px;width:283px;height:54.2px;background:#333438;border-radius:6px"></div>
<div style="left:1091px;top:397.25px;width:42px;height:38px;background:#27282b;border-radius:5px"></div>
<svg style="left:1099px;top:403.25px;" width="26" height="26" viewBox="0 0 26 26"><rect x="1.85" y="6.8" width="22.2" height="12.2" rx="6.1" fill="#25cbef"/><path d="M5.7 13l2.1 1.6 3.9-3.4" fill="none" stroke="#1b2a33" stroke-width="1.3"/></svg>
<div class="t" style="left:1148.24px;top:407.00px;font-size:15px;line-height:15px;letter-spacing:0.000px;transform:scaleX(1.0614);transform-origin:0 0;color:#ededed;-webkit-text-stroke:0.25px #ededed">Buttons</div>
<svg style="left:1325px;top:409.25px;" width="12" height="9" viewBox="0 0 12 9"><path d="M1.5 1.6L6 6.1 10.5 1.6" fill="none" stroke="#f0f0f0" stroke-width="2.3"/></svg>
<div style="left:1075px;top:451.70px;width:283px;height:54.2px;background:#333438;border-radius:6px"></div>
<div style="left:1091px;top:459.70px;width:42px;height:38px;background:#27282b;border-radius:5px"></div>
<svg style="left:1099px;top:465.70px;" width="26" height="26" viewBox="0 0 26 26"><rect x="3" y="2.7" width="20.4" height="20.6" rx="2.5" fill="#dec8fb"/><path d="M6.2 12.55l4.35 4.35 9.15-8.7" fill="none" stroke="#1e1a30" stroke-width="2.2"/></svg>
<div class="t" style="left:1149.30px;top:470.00px;font-size:15px;line-height:15px;letter-spacing:0.000px;transform:scaleX(1.0489);transform-origin:0 0;color:#ededed;-webkit-text-stroke:0.25px #ededed">Chips</div>
<svg style="left:1325px;top:471.70000000000005px;" width="12" height="9" viewBox="0 0 12 9"><path d="M1.5 1.6L6 6.1 10.5 1.6" fill="none" stroke="#f0f0f0" stroke-width="2.3"/></svg>
<div style="left:1075px;top:514.15px;width:283px;height:54.2px;background:#333438;border-radius:6px"></div>
<div style="left:1091px;top:522.15px;width:42px;height:38px;background:#27282b;border-radius:5px"></div>
<svg style="left:1099px;top:528.15px;" width="26" height="26" viewBox="0 0 26 26"><rect x="3.4" y="4" width="19.4" height="15.3" rx="2" fill="none" stroke="#f6d443" stroke-width="2.6"/><rect x="8.7" y="20" width="9" height="2.9" rx="0.8" fill="#f6d443"/><path d="M6.4 9.8h11M6.6 13.9h13.4" stroke="#f6d443" stroke-width="1.6"/><path d="M16.4 7.6l3.4 2.2-3.4 2.2z M10.4 11.7l-3.4 2.2 3.4 2.2z" fill="#f6d443"/></svg>
<div class="t" style="left:1149.30px;top:532.00px;font-size:15px;line-height:15px;letter-spacing:0.000px;transform:scaleX(0.9945);transform-origin:0 0;color:#ededed;-webkit-text-stroke:0.25px #ededed">Sliders</div>
<svg style="left:1325px;top:534.1500000000001px;" width="12" height="9" viewBox="0 0 12 9"><path d="M1.5 1.6L6 6.1 10.5 1.6" fill="none" stroke="#f0f0f0" stroke-width="2.3"/></svg>
<div style="left:1075px;top:576.60px;width:283px;height:54.2px;background:#333438;border-radius:6px"></div>
<div style="left:1091px;top:584.60px;width:42px;height:38px;background:#27282b;border-radius:5px"></div>
<svg style="left:1099px;top:590.60px;" width="26" height="26" viewBox="0 0 26 26"><rect x="4.4" y="3.9" width="17.8" height="17.8" rx="2" fill="none" stroke="#ff9c12" stroke-width="2.75"/><path d="M3 9.1V4.5a2 2 0 0 1 2-2h16.6a2 2 0 0 1 2 2v4.6z" fill="#ff9c12"/><rect x="7.6" y="11" width="5.7" height="5" fill="#ff9c12"/><rect x="6.4" y="0.9" width="2.8" height="2.5" rx="0.8" fill="#ff9c12"/><rect x="17" y="0.9" width="3" height="2.5" rx="0.8" fill="#ff9c12"/></svg>
<div class="t" style="left:1148.29px;top:595.00px;font-size:15px;line-height:15px;letter-spacing:0.000px;transform:scaleX(1.0140);transform-origin:0 0;color:#ededed;-webkit-text-stroke:0.25px #ededed">Date Pickers</div>
<svg style="left:1325px;top:596.6px;" width="12" height="9" viewBox="0 0 12 9"><path d="M1.5 1.6L6 6.1 10.5 1.6" fill="none" stroke="#f0f0f0" stroke-width="2.3"/></svg>
<div style="left:1075px;top:639.05px;width:283px;height:54.2px;background:#333438;border-radius:6px"></div>
<div style="left:1091px;top:647.05px;width:42px;height:38px;background:#27282b;border-radius:5px"></div>
<svg style="left:1099px;top:653.05px;" width="26" height="26" viewBox="0 0 26 26"><circle cx="13" cy="12.9" r="9.8" fill="none" stroke="#20a88f" stroke-width="2.6"/><path d="M12.6 7.7v6l5.05 3.2" fill="none" stroke="#20a88f" stroke-width="1.8"/></svg>
<div class="t" style="left:1149.30px;top:657.00px;font-size:15px;line-height:15px;letter-spacing:0.000px;transform:scaleX(1.0021);transform-origin:0 0;color:#ededed;-webkit-text-stroke:0.25px #ededed">Time Pickers</div>
<svg style="left:1325px;top:659.0500000000001px;" width="12" height="9" viewBox="0 0 12 9"><path d="M1.5 1.6L6 6.1 10.5 1.6" fill="none" stroke="#f0f0f0" stroke-width="2.3"/></svg>
<div style="left:1075px;top:701.50px;width:283px;height:54.2px;background:#333438;border-radius:6px"></div>
<div style="left:1091px;top:709.50px;width:42px;height:38px;background:#27282b;border-radius:5px"></div>
<svg style="left:1099px;top:715.50px;" width="26" height="26" viewBox="0 0 26 26"><circle cx="10.3" cy="10.1" r="6" fill="none" stroke="#f0736a" stroke-width="2.6"/><path d="M15.8 15.5l6 6" stroke="#f0736a" stroke-width="2.8" stroke-linecap="round"/></svg>
<div class="t" style="left:1149.30px;top:720.00px;font-size:15px;line-height:15px;letter-spacing:0.000px;transform:scaleX(1.0154);transform-origin:0 0;color:#ededed;-webkit-text-stroke:0.25px #ededed">Search View</div>
<svg style="left:1325px;top:721.5px;" width="12" height="9" viewBox="0 0 12 9"><path d="M1.5 1.6L6 6.1 10.5 1.6" fill="none" stroke="#f0f0f0" stroke-width="2.3"/></svg>
<div style="left:1075px;top:763.95px;width:283px;height:54.2px;background:#333438;border-radius:6px"></div>
<div style="left:1091px;top:771.95px;width:42px;height:38px;background:#27282b;border-radius:5px"></div>
<svg style="left:1099px;top:777.95px;" width="26" height="26" viewBox="0 0 26 26"><path d="M21.85 7.7V4H4.3v17.8h17.55v-3.5" fill="none" stroke="#d3ef7c" stroke-width="2.6" stroke-linejoin="round" stroke-linecap="round"/><path d="M9.4 12.8h13.4M17.9 8.2l4.9 4.6-4.9 4.8" fill="none" stroke="#d3ef7c" stroke-width="2.6" stroke-linecap="round" stroke-linejoin="round"/></svg>
<div class="t" style="left:1149.30px;top:782.00px;font-size:15px;line-height:15px;letter-spacing:0.000px;transform:scaleX(1.0459);transform-origin:0 0;color:#ededed;-webkit-text-stroke:0.25px #ededed">Output Cells</div>
<svg style="left:1325px;top:783.95px;" width="12" height="9" viewBox="0 0 12 9"><path d="M1.5 1.6L6 6.1 10.5 1.6" fill="none" stroke="#f0f0f0" stroke-width="2.3"/></svg>
</body></html>
